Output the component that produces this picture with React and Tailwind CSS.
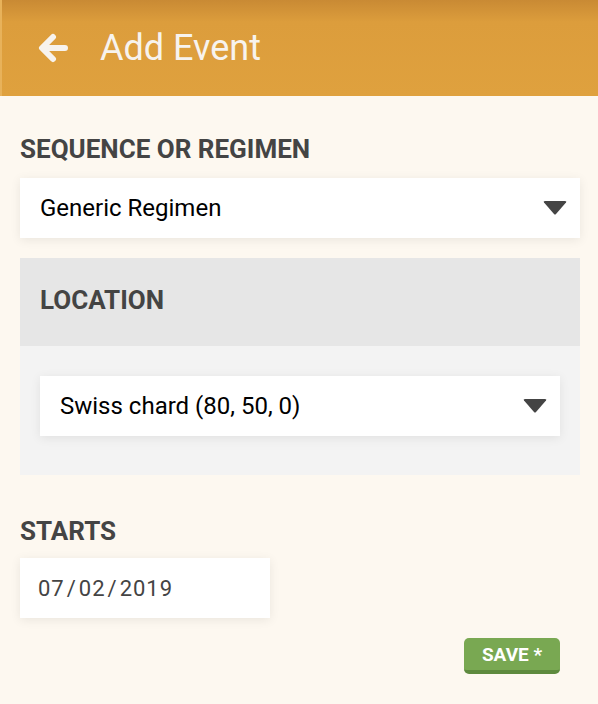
import React from 'react';

const Caret = () => (
  <svg width="24" height="14" viewBox="0 0 24 14" className="shrink-0">
    <path d="M1 1.5 Q0 0 2 0 H22 Q24 0 23 1.5 L13 13 Q12 14 11 13 Z" fill="#444444" />
  </svg>
);

const BackArrow = () => (
  <svg width="30" height="30" viewBox="0 0 30 30">
    <path d="M27 15 H5 M15 4 L4 15 L15 26" fill="none" stroke="#f7f3ee" strokeWidth="6" strokeLinecap="round" strokeLinejoin="round" />
  </svg>
);

const SelectBox = ({ value }) => (
  <div className="flex items-center justify-between h-[60px] bg-white pl-5 pr-[13px] shadow-[0_2px_10px_rgba(0,0,0,0.08)]">
    <span className="text-[24px] text-black">{value}</span>
    <Caret />
  </div>
);

const Label = ({ children, className = '' }) => (
  <div className={`text-[26px] leading-[30px] font-bold uppercase text-[#444444] ${className}`}>
    {children}
  </div>
);

export default function App() {
  return (
    <div className="w-[598px] h-[704px] bg-[#fdf8f0] overflow-hidden" style={{ fontFamily: 'Roboto, "Noto Sans", sans-serif' }}>
      {/* header */}
      <header className="h-[96px] flex items-center pl-9 bg-[linear-gradient(to_bottom,#c98a34_0px,#dc9d3c_22px,#dfa13e_100%)] border-l-2 border-[#e8b25a]">
        <BackArrow />
        <h1 className="ml-[32px] text-[36px] text-[#f7f3ee] font-normal leading-none">Add Event</h1>
      </header>

      <main className="w-[600px] px-5 pt-[38px]">
        <Label>Sequence or Regimen</Label>
        <div className="mt-[14px]">
          <SelectBox value="Generic Regimen" />
        </div>

        {/* location panel */}
        <section className="mt-5">
          <div className="h-[88px] bg-[#e6e6e6] flex items-center px-5 pb-[5px]">
            <Label>Location</Label>
          </div>
          <div className="bg-[#f3f3f3] px-5 pt-[30px] pb-[39px]">
            <SelectBox value="Swiss chard (80, 50, 0)" />
          </div>
        </section>

        <Label className="mt-[41px]">Starts</Label>
        <div className="mt-[12px] w-[250px] h-[60px] bg-white flex items-center pl-[18px] shadow-[0_2px_10px_rgba(0,0,0,0.08)]">
          <span className="text-[22px] text-[#444444] tracking-[1px]">07<span className="mx-[2px]">/</span>02<span className="mx-[2px]">/</span>2019</span>
        </div>

        <div className="flex justify-end pr-[20px] mt-5">
          <button className="w-[96px] h-[36px] rounded-[5px] bg-[#79a852] border-b-[4px] border-[#5e8a3e] text-white font-bold text-[19px] leading-none">
            SAVE *
          </button>
        </div>
      </main>
    </div>
  );
}
